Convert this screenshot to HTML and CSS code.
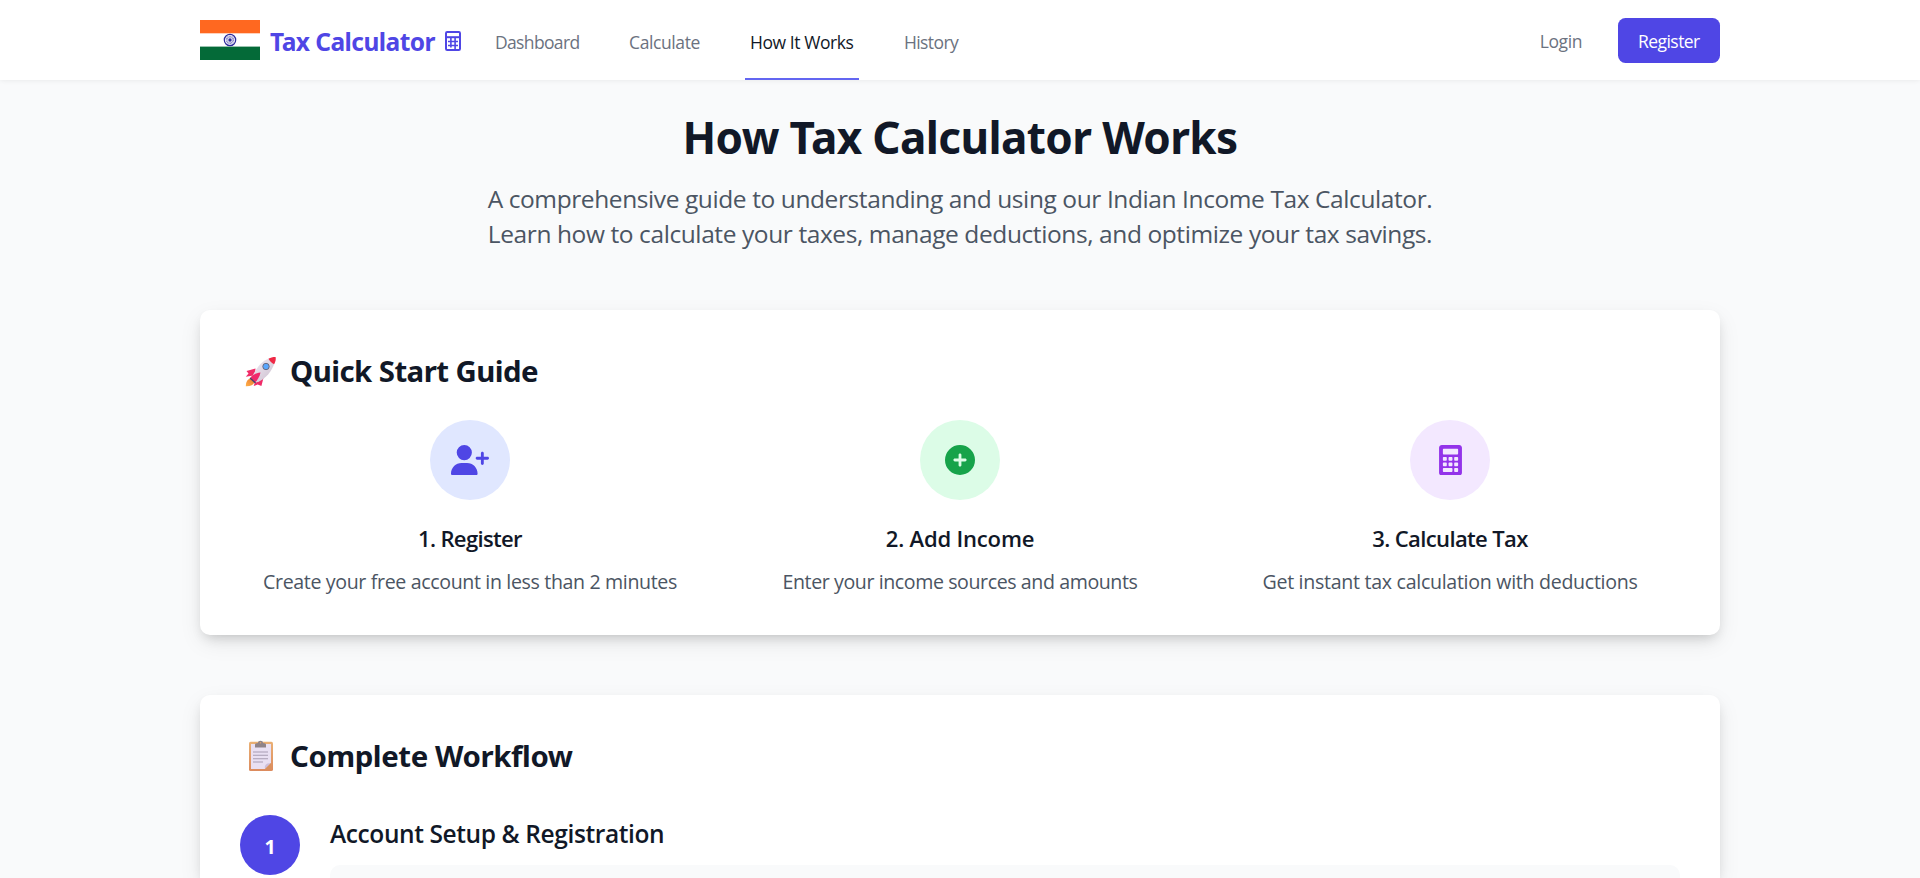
FILE: index.html
```
<!DOCTYPE html>
<html lang="en">
<head>
<meta charset="utf-8">
<title>How Tax Calculator Works</title>
<link rel="stylesheet" href="styles.css">
</head>
<body>
<header class="header">
  <div class="container header-row">
    <a class="brand">
      <svg class="flag" width="60" height="40" viewBox="0 0 60 40">
        <rect width="60" height="40" fill="#fff"/>
        <rect width="60" height="13.3" fill="#ff6820"/>
        <rect y="26.6" width="60" height="13.4" fill="#046a38"/>
        <circle cx="30" cy="20" r="5.7" fill="#f3f3fa" stroke="#2d2a9c" stroke-width="1.2"/>
        <circle cx="30" cy="20" r="3.3" fill="none" stroke="#8583c5" stroke-width="1.8" stroke-dasharray=".9 .5"/>
        <circle cx="30" cy="20" r="1.7" fill="#2d2a9c"/>
      </svg>
      <span class="brand-name">Tax Calculator</span>
      <svg class="brand-icon" width="16" height="20" viewBox="0 0 16 20" fill="none" stroke="#4f46e5">
        <rect x="1" y="1" width="14" height="18" rx="1.2" stroke-width="2"/>
        <path d="M2 6.200h12" stroke-width="2"/>
        <path d="M3 10.500h10M3 14.500h10M5.900 7v9.500M10.100 7v11" stroke-width="1.600"/>
      </svg>
    </a>
    <nav class="nav">
      <a class="nav-link dashboard">Dashboard</a>
      <a class="nav-link calculate">Calculate</a>
      <a class="nav-link how active">How It Works</a>
      <a class="nav-link history">History</a>
    </nav>
    <div class="auth">
      <a class="login">Login</a>
      <a class="register">Register</a>
    </div>
  </div>
</header>
<main class="container">
  <section class="hero">
    <h1>How Tax Calculator Works</h1>
    <p>A comprehensive guide to understanding and using our Indian Income Tax Calculator.<br>Learn how to calculate your taxes, manage deductions, and optimize your tax savings.</p>
  </section>

  <section class="card quick">
    <h2>
      <svg class="emoji" width="40" height="40" viewBox="0 0 40 40">
        <defs>
          <linearGradient id="body" x1="0" y1="0" x2="1" y2="1"><stop offset="0" stop-color="#f4eef8"/><stop offset="1" stop-color="#c9bccb"/></linearGradient>
          <linearGradient id="flame" x1="1" y1="0" x2="0" y2="1"><stop offset="0" stop-color="#e87830"/><stop offset="1" stop-color="#ffb048"/></linearGradient>
        </defs>
        <path d="M10.500 28.500C7 29.500 6 32 5.800 36.200c4.500.2 7.500-1 8.700-4.200z" fill="url(#flame)"/>
        <path d="M15.500 18.500l-9 2.500 2 2.500-2.700 3.300 9-1.500zM24 26l-2.600 10-3.700-1.500-4 1.500 2-6z" fill="#f02b68"/>
        <path d="M33.500 7.500c-8.500 1-15 6.500-20.500 17.500l-1.500 3.500 4 4.200 4-1.500C29 26.500 34 17 35.500 9z" fill="url(#body)"/>
        <path d="M28.500 8.800c2.200-1.200 4.700-1.900 7.100-1.800.5 2.500-.2 5-1.500 7.200-2.300-1-4.300-2.700-5.600-5.400z" fill="#ef2845"/>
        <path d="M20.500 22.500c-5 .5-9 3-10.200 5.600l4.700 4.600c2.700-2.700 4.700-6.200 5.500-10.200z" fill="#ef286b"/>
        <path d="M10 28l5.500 5" stroke="#47406c" stroke-width="1.400"/>
        <circle cx="26" cy="16.500" r="3.200" fill="#58a6ff" stroke="#676a83" stroke-width="1"/>
      </svg>
      <span>Quick Start Guide</span>
    </h2>
    <div class="steps">
      <div class="step">
        <div class="bubble indigo">
          <svg width="38" height="30.400" viewBox="0 0 640 512" fill="#4f46e5"><path d="M96 128a128 128 0 1 1 256 0A128 128 0 1 1 96 128zM0 482.300C0 383.800 79.800 304 178.300 304h91.400C368.200 304 448 383.800 448 482.300c0 16.400-13.300 29.700-29.700 29.700H29.700C13.300 512 0 498.700 0 482.300zM504 312V248H440c-13.300 0-24-10.700-24-24s10.700-24 24-24h64V136c0-13.300 10.700-24 24-24s24 10.700 24 24v64h64c13.300 0 24 10.700 24 24s-10.700 24-24 24H552v64c0 13.300-10.700 24-24 24s-24-10.700-24-24z"/></svg>
        </div>
        <h3 class="t1">1. Register</h3>
        <p class="d1">Create your free account in less than 2 minutes</p>
      </div>
      <div class="step">
        <div class="bubble green">
          <svg width="30" height="30" viewBox="0 0 512 512" fill="#16a34a"><path d="M256 512A256 256 0 1 0 256 0a256 256 0 1 0 0 512zM232 344V280H168c-13.300 0-24-10.700-24-24s10.700-24 24-24h64V168c0-13.300 10.700-24 24-24s24 10.700 24 24v64h64c13.300 0 24 10.700 24 24s-10.700 24-24 24H280v64c0 13.300-10.700 24-24 24s-24-10.700-24-24z"/></svg>
        </div>
        <h3 class="t2">2. Add Income</h3>
        <p class="d2">Enter your income sources and amounts</p>
      </div>
      <div class="step">
        <div class="bubble purple">
          <svg width="23" height="30.500" viewBox="0 0 384 512"><path fill="#9333ea" fill-rule="evenodd" d="M48 0C21 0 0 21 0 48V464c0 27 21 48 48 48H336c27 0 48-21 48-48V48c0-27-21-48-48-48H48zM80 64H304c9 0 16 7 16 16v64c0 9-7 16-16 16H80c-9 0-16-7-16-16V80c0-9 7-16 16-16zM80 200h34c9 0 16 7 16 16v32c0 9-7 16-16 16H80c-9 0-16-7-16-16V216c0-9 7-16 16-16zM175 200h34c9 0 16 7 16 16v32c0 9-7 16-16 16h-34c-9 0-16-7-16-16V216c0-9 7-16 16-16zM270 200h34c9 0 16 7 16 16v32c0 9-7 16-16 16h-34c-9 0-16-7-16-16V216c0-9 7-16 16-16zM80 292h34c9 0 16 7 16 16v32c0 9-7 16-16 16H80c-9 0-16-7-16-16V308c0-9 7-16 16-16zM175 292h34c9 0 16 7 16 16v32c0 9-7 16-16 16h-34c-9 0-16-7-16-16V308c0-9 7-16 16-16zM270 292h34c9 0 16 7 16 16v32c0 9-7 16-16 16h-34c-9 0-16-7-16-16V308c0-9 7-16 16-16zM80 388h129c9 0 16 7 16 16v32c0 9-7 16-16 16H80c-9 0-16-7-16-16V404c0-9 7-16 16-16zM270 388h34c9 0 16 7 16 16v32c0 9-7 16-16 16h-34c-9 0-16-7-16-16V404c0-9 7-16 16-16z"/></svg>
        </div>
        <h3 class="t3">3. Calculate Tax</h3>
        <p class="d3">Get instant tax calculation with deductions</p>
      </div>
    </div>
  </section>

  <section class="card workflow">
    <h2>
      <svg class="emoji" width="40" height="40" viewBox="0 0 40 40">
        <defs>
          <linearGradient id="board" x1="0" y1="0" x2="0" y2="1"><stop offset="0" stop-color="#eab074"/><stop offset="1" stop-color="#dc8b5e"/></linearGradient>
        </defs>
        <rect x="9" y="6.800" width="24" height="29.200" rx="1.600" fill="url(#board)"/>
        <path d="M11 9h20v19l-6 6H11z" fill="#e9e0f3"/>
        <path d="M25 34c-.8-3 .5-6 6-6z" fill="#cdbfdb"/>
        <path d="M25 34l6-6v6z" fill="#d9925f"/>
        <path d="M15 12.500V9.700c0-1 1-1.500 3-1.700 0-1.500 1-2.300 2.500-2.300S23 6.500 23 8c2 .2 3 .7 3 1.700v2.800z" fill="#8f8389"/>
        <circle cx="20.500" cy="7.800" r=".8" fill="#dca36e"/>
        <path d="M13 17h15M13 20.300h15M13 23.700h15M13 27h10" stroke="#a79cb3" stroke-width="1.100"/>
      </svg>
      <span>Complete Workflow</span>
    </h2>
    <div class="flow">
      <div class="number">1</div>
      <div class="flow-body">
        <h3>Account Setup &amp; Registration</h3>
        <div class="panel"></div>
      </div>
    </div>
  </section>
</main>
</body>
</html>
```
FILE: styles.css
```
* { box-sizing: border-box; margin: 0; padding: 0; }
body { background: #f9fafb; color: #111827; font-family: "Open Sans", "Noto Sans", sans-serif; }
svg { display: block; flex: none; }
.container { width: 1520px; margin: 0 auto; }

.header { position: relative; height: 80px; background: #fff; box-shadow: 0 1.25px 5px rgba(0,0,0,.07); }
.header-row { display: flex; height: 80px; }
.brand { display: flex; align-items: center; width: 290px; }
.brand-name { margin-left: 10px; padding-top: 3px; width: 175px; font: 700 24.5px/35px "Noto Sans", sans-serif; letter-spacing: -.54px; color: #4f46e5; white-space: nowrap; }
.brand-icon { margin-top: 1px; }
.nav { display: flex; gap: 40px; }
.nav-link { display: flex; align-items: center; padding: 7px 5px 0; border-bottom: 2px solid transparent; font-size: 17.5px; line-height: 25px; color: #6b7280; white-space: nowrap; }
.nav-link.active { color: #111827; border-color: #6366f1; }
.dashboard { width: 94px; letter-spacing: -.65px; }
.calculate { width: 81px; letter-spacing: -.39px; }
.how { width: 114px; letter-spacing: -.43px; }
.history { width: 66px; letter-spacing: -.6px; }
.auth { display: flex; align-items: center; margin-left: auto; font-size: 17.5px; line-height: 25px; }
.login { margin-right: 36px; padding-top: 2px; color: #6b7280; letter-spacing: -.4px; }
.register { width: 102px; height: 45px; margin-top: 1px; padding: 11px 0 0 20px; border-radius: 7.5px; background: #4f46e5; color: #fff; letter-spacing: -.55px; }

.hero { padding-top: 32px; text-align: center; }
.hero h1 { font: 700 44.1px/50px "Noto Sans", sans-serif; letter-spacing: -.628px; }
.hero p { margin-top: 19px; font-size: 24.5px; line-height: 35px; letter-spacing: -.405px; color: #4b5563; }

.card { padding: 40px; border-radius: 10px; background: #fff; box-shadow: 0 8px 22px rgba(0,0,0,.08), 0 6px 13px -5px rgba(0,0,0,.2); }
.card h2 { display: flex; align-items: center; height: 40px; font: 700 29.4px/40px "Noto Sans", sans-serif; white-space: nowrap; }
.card h2 span { padding-top: 2px; }
.emoji { margin-right: 10px; }
.quick { height: 325px; margin-top: 59px; }
.quick h2 { letter-spacing: -.563px; }
.steps { display: grid; grid-template-columns: repeat(3, 1fr); gap: 30px; margin-top: 30px; }
.step { text-align: center; }
.bubble { display: flex; align-items: center; justify-content: center; width: 80px; height: 80px; margin: 0 auto; border-radius: 50%; }
.indigo { background: #e0e7ff; }
.green { background: #dcfce7; }
.purple { background: #f3e8ff; }
.step h3 { margin-top: 21px; font-size: 22.05px; font-weight: 600; line-height: 35px; }
.step p { margin-top: 11px; font-size: 19.6px; line-height: 30px; color: #4b5563; }
.t1 { letter-spacing: -.668px; }
.t2 { letter-spacing: -.192px; }
.t3 { letter-spacing: -.638px; }
.d1 { letter-spacing: -.357px; }
.d2 { letter-spacing: -.412px; }
.d3 { letter-spacing: -.296px; }

.workflow { height: 183px; margin-top: 60px; padding-bottom: 0; border-radius: 10px 10px 0 0; }
.workflow h2 { letter-spacing: -.4px; }
.flow { display: flex; gap: 30px; margin-top: 40px; }
.number { flex: none; width: 60px; height: 60px; border-radius: 50%; background: #4f46e5; color: #fff; font: 700 19.6px/63px "Noto Sans", sans-serif; text-align: center; }
.flow-body { flex: 1; }
.flow-body h3 { padding-top: 1px; font-size: 24.5px; font-weight: 600; line-height: 35px; letter-spacing: -.394px; }
.panel { height: 13px; margin-top: 14px; border-radius: 10px 10px 0 0; background: #f9fafb; }
```
